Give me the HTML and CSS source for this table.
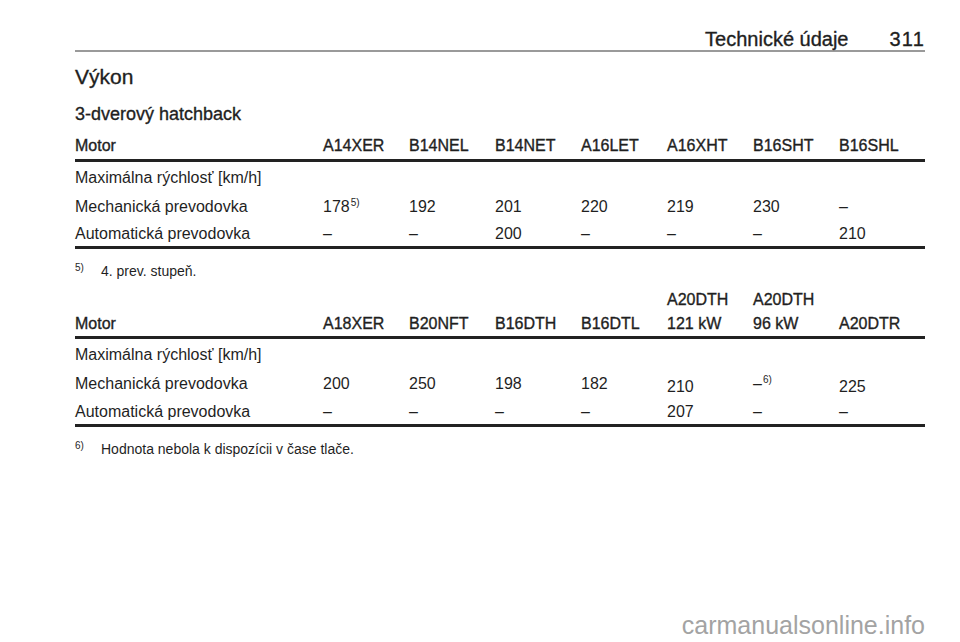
FILE: index.html
```html
<!DOCTYPE html>
<html lang="sk">
<head>
<meta charset="utf-8">
<title>Technické údaje 311</title>
<link rel="stylesheet" href="styles.css">
</head>
<body>
<div class="page">
  <header class="runhead">
    <span class="runhead-title">Technické údaje</span>
    <span class="runhead-num">311</span>
  </header>

  <h1 class="title">Výkon</h1>
  <h2 class="subtitle">3-dverový hatchback</h2>

  <div class="spec t1">
    <div class="row head">
      <div class="c first">Motor</div>
      <div class="c">A14XER</div>
      <div class="c">B14NEL</div>
      <div class="c">B14NET</div>
      <div class="c">A16LET</div>
      <div class="c">A16XHT</div>
      <div class="c">B16SHT</div>
      <div class="c">B16SHL</div>
    </div>
    <div class="row r1">
      <div class="c first">Maximálna rýchlosť [km/h]</div>
    </div>
    <div class="row r2">
      <div class="c first">Mechanická prevodovka</div>
      <div class="c">178<sup class="fn">5)</sup></div>
      <div class="c">192</div>
      <div class="c">201</div>
      <div class="c">220</div>
      <div class="c">219</div>
      <div class="c">230</div>
      <div class="c">–</div>
    </div>
    <div class="row r3 last">
      <div class="c first">Automatická prevodovka</div>
      <div class="c">–</div>
      <div class="c">–</div>
      <div class="c">200</div>
      <div class="c">–</div>
      <div class="c">–</div>
      <div class="c">–</div>
      <div class="c">210</div>
    </div>
  </div>
  <p class="note"><span class="note-mark">5)</span><span>4. prev. stupeň.</span></p>

  <div class="spec t2">
    <div class="row head">
      <div class="c first">Motor</div>
      <div class="c">A18XER</div>
      <div class="c">B20NFT</div>
      <div class="c">B16DTH</div>
      <div class="c">B16DTL</div>
      <div class="c">A20DTH<br>121 kW</div>
      <div class="c">A20DTH<br>96 kW</div>
      <div class="c">A20DTR</div>
    </div>
    <div class="row r1">
      <div class="c first">Maximálna rýchlosť [km/h]</div>
    </div>
    <div class="row r2">
      <div class="c first">Mechanická prevodovka</div>
      <div class="c">200</div>
      <div class="c">250</div>
      <div class="c">198</div>
      <div class="c">182</div>
      <div class="c low">210</div>
      <div class="c">–<sup class="fn">6)</sup></div>
      <div class="c low">225</div>
    </div>
    <div class="row r3 last">
      <div class="c first">Automatická prevodovka</div>
      <div class="c">–</div>
      <div class="c">–</div>
      <div class="c">–</div>
      <div class="c">–</div>
      <div class="c">207</div>
      <div class="c">–</div>
      <div class="c">–</div>
    </div>
  </div>
  <p class="note"><span class="note-mark">6)</span><span>Hodnota nebola k dispozícii v čase tlače.</span></p>
</div>
<div class="watermark">carmanualsonline.info</div>
</body>
</html>
```

FILE: styles.css
```css
html, body {
  margin: 0;
  padding: 0;
  background: #ffffff;
}
body {
  width: 960px;
  height: 642px;
  overflow: hidden;
  position: relative;
  font-family: "Liberation Sans", Arial, sans-serif;
  color: #1f1f1f;
}
.page {
  width: 850px;
  padding-left: 75px;
}
.runhead {
  display: flex;
  justify-content: flex-end;
  gap: 41px;
  padding-top: 29px;
  font-size: 20px;
  line-height: 21px;
  border-bottom: 2px solid #9a9a9a;
  -webkit-text-stroke: 0.35px #1f1f1f;
}
.runhead-num {
  letter-spacing: 1.2px;
}
.title {
  margin: 0;
  padding-top: 12px;
  font-size: 21px;
  line-height: 26px;
  font-weight: normal;
  -webkit-text-stroke: 0.35px #1f1f1f;
}
.subtitle {
  margin: 0;
  padding-top: 13px;
  font-size: 18px;
  line-height: 22px;
  font-weight: normal;
  -webkit-text-stroke: 0.35px #1f1f1f;
}
.spec {
  font-size: 16px;
}
.row {
  display: grid;
  grid-template-columns: 248px repeat(7, 86px);
  line-height: 20px;
}
.row .c {
  white-space: nowrap;
}
.t1 .head {
  padding-top: 11px;
  padding-bottom: 3px;
}
.t2 .head {
  margin-top: 8px;
  line-height: 24px;
  padding-bottom: 0;
  align-items: end;
}
.head {
  border-bottom: 3px solid #222222;
  -webkit-text-stroke: 0.35px #1f1f1f;
}
.r1 {
  padding: 6px 0 5px;
}
.r2 {
  padding: 4px 0 4px;
}
.t2 .r2 {
  padding-bottom: 5px;
}
.r3 {
  padding: 3px 0 2px;
}
.last {
  border-bottom: 3px solid #222222;
}
.low {
  transform: translateY(3px);
}
.fn {
  font-size: 10px;
  line-height: 0;
  vertical-align: 6px;
  margin-left: 1px;
}
.note {
  display: flex;
  margin: 13px 0 0;
  font-size: 14px;
  line-height: 18px;
}
.note-mark {
  width: 26px;
  font-size: 10px;
  position: relative;
  top: -3px;
}
.watermark {
  position: absolute;
  right: 35px;
  top: 609px;
  font-size: 25px;
  line-height: 32px;
  color: #a3a3a3;
  font-family: "Liberation Sans", Arial, sans-serif;
}
```
